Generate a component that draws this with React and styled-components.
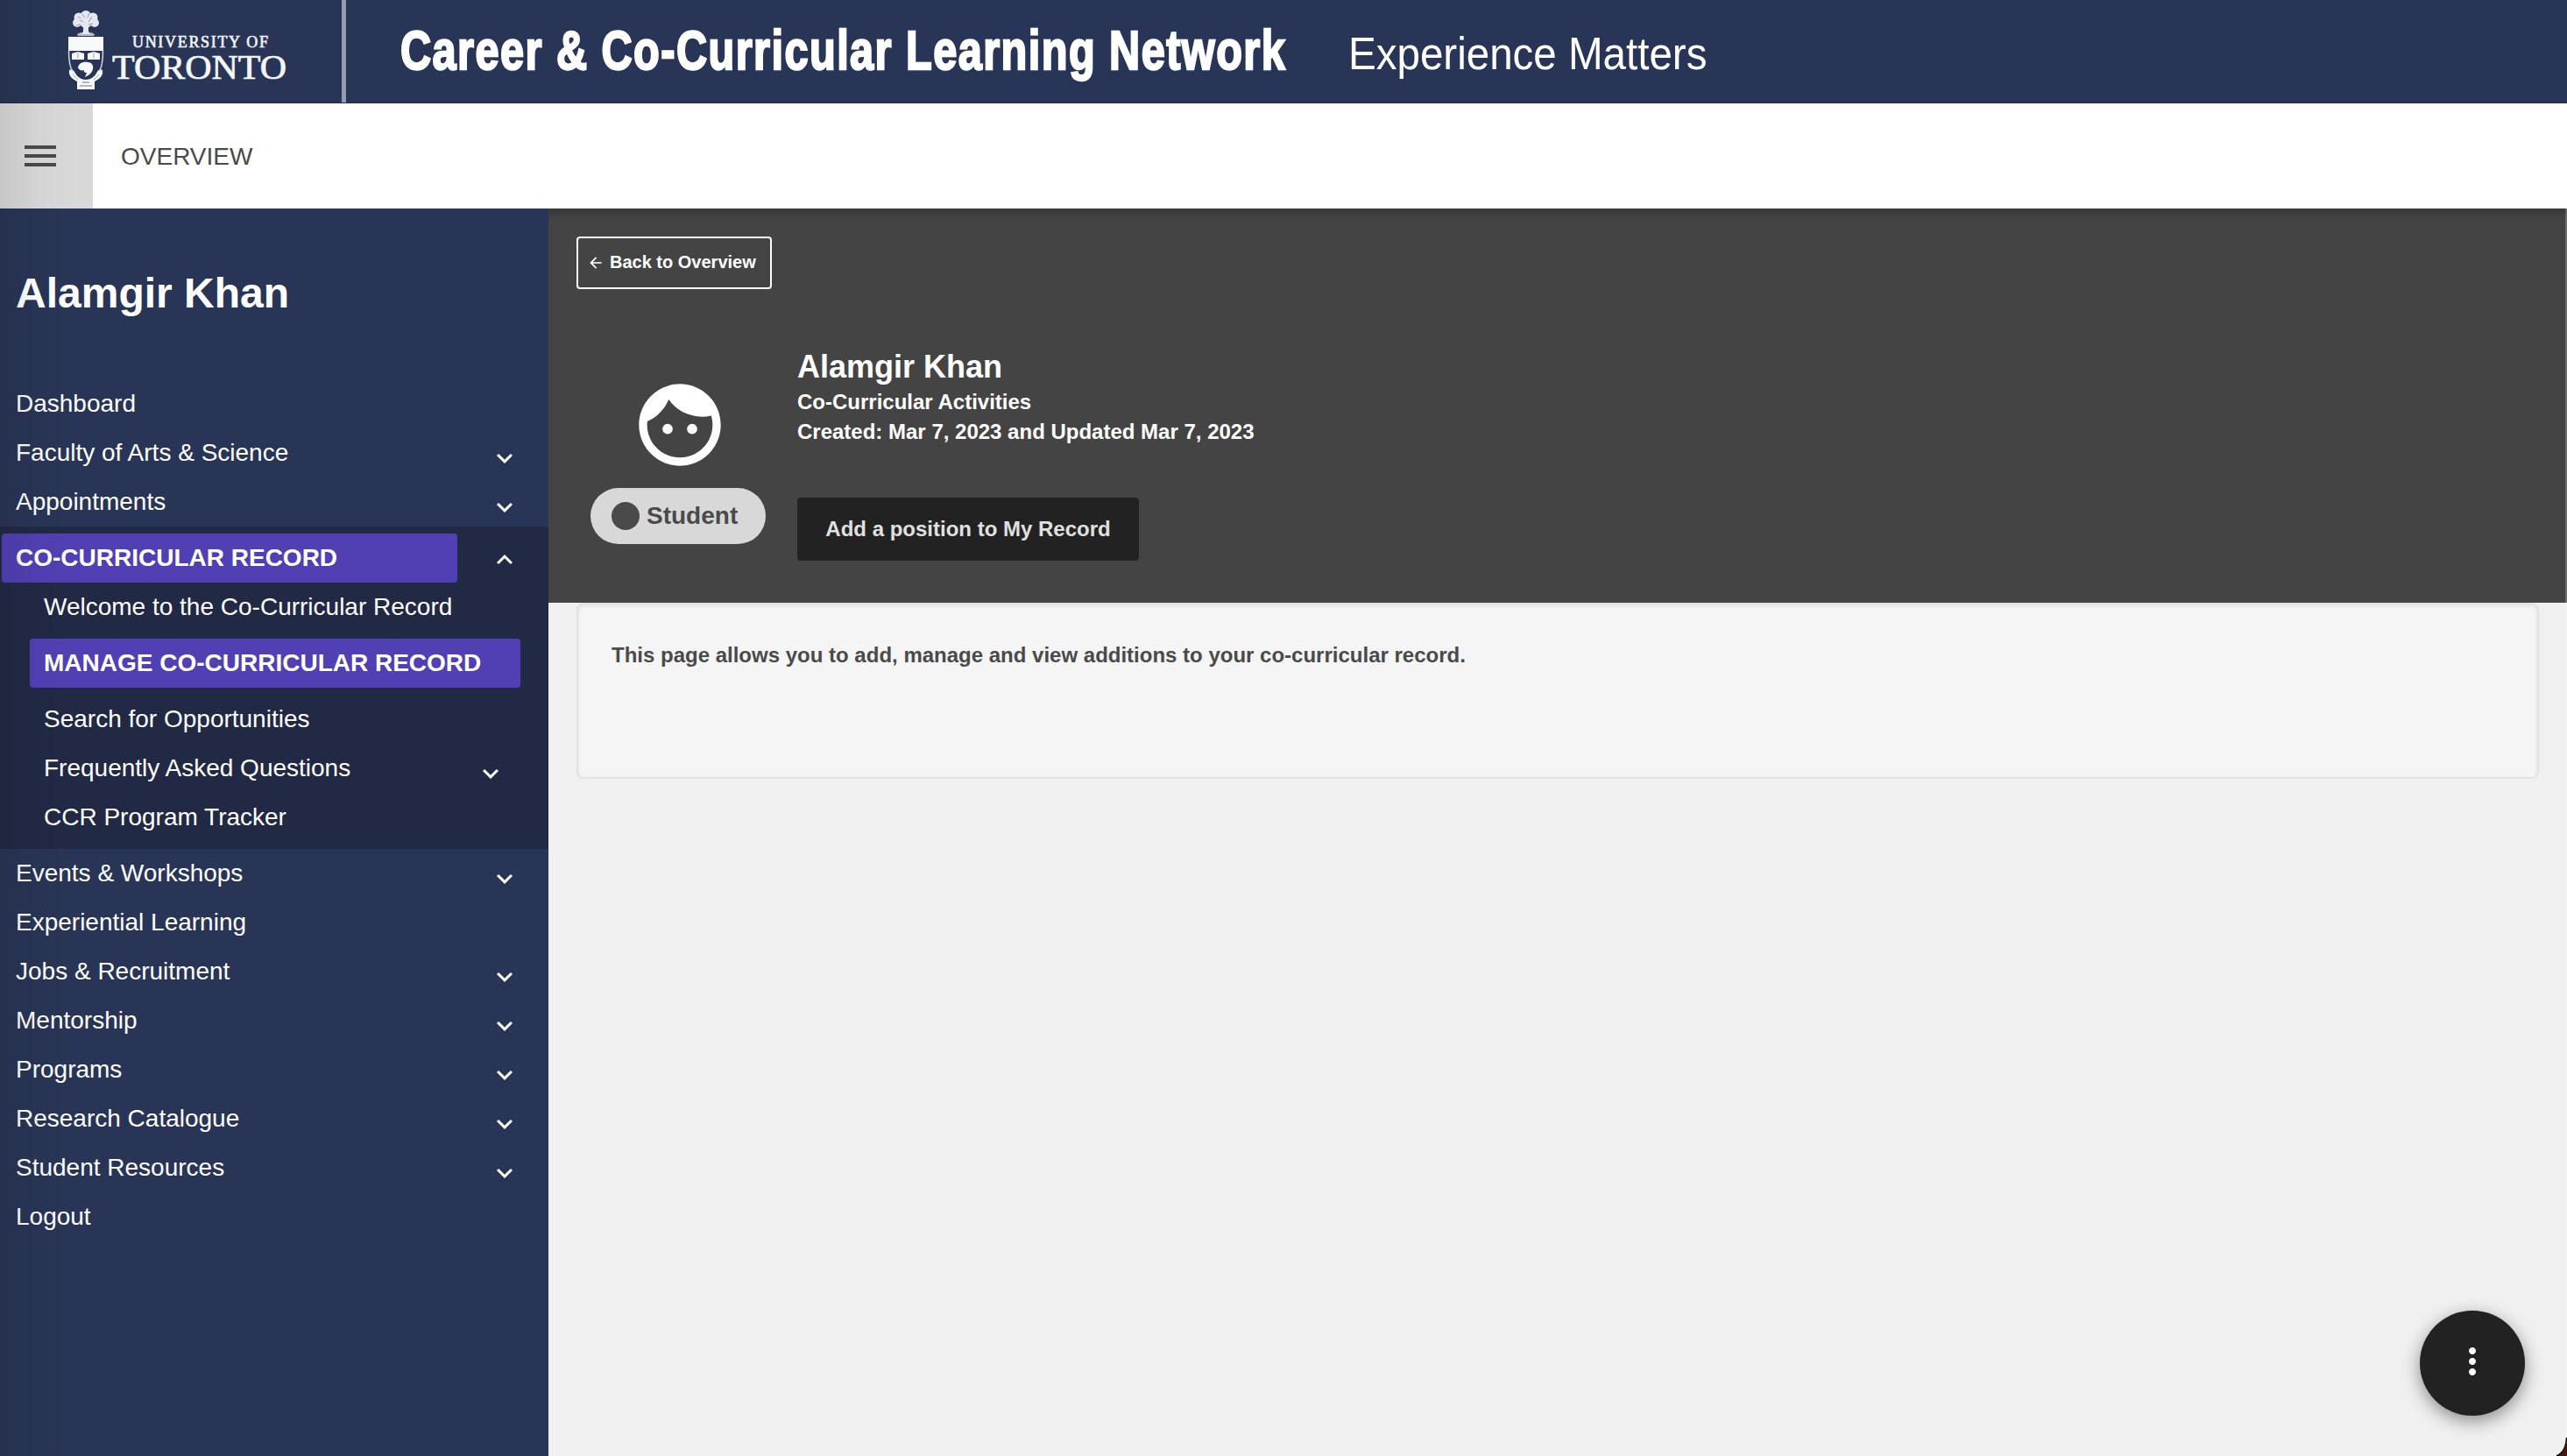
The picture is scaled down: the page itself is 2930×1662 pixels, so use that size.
import React from "react";
import styled, { createGlobalStyle, css } from "styled-components";
import { MdMenu, MdExpandMore, MdExpandLess, MdArrowBack, MdFace, MdMoreVert } from "react-icons/md";

const Global = createGlobalStyle`
  * { box-sizing: border-box; }
  html, body { margin: 0; background: #f0f0f0; }
  body { font-family: "Liberation Sans", Arial, sans-serif; overflow: hidden; }
`;

const Page = styled.div`
  position: relative;
  display: flex;
  flex-direction: column;
  width: 2930px;
  height: 1662px;
  overflow: hidden;
  background: #f0f0f0;
`;

const EdgeShade = styled.div`
  position: absolute;
  left: 0;
  top: 0;
  bottom: 0;
  width: 90px;
  pointer-events: none;
  background: linear-gradient(90deg, rgba(0, 0, 0, 0.08), rgba(0, 0, 0, 0.02) 50%, rgba(0, 0, 0, 0));
`;

const WindowEdge = styled.div`
  position: absolute;
  right: 0;
  top: 238px;
  bottom: 22px;
  width: 2px;
  background: rgba(255, 255, 255, 0.22);
`;

const ScreenCorner = styled.svg`
  position: absolute;
  right: 0;
  bottom: 0;
`;

const Banner = styled.header`
  display: flex;
  height: 118px;
  background: #293556;
  border-bottom: 1px solid #232b4b;
`;

const Brand = styled.div`
  display: flex;
  width: 395px;
  padding: 11px 0 0 77px;
  border-right: 5px solid #949ab0;
`;

const Wordmark = styled.svg`
  margin-left: 9px;
  font-family: "Liberation Serif", "Times New Roman", serif;
  fill: #f4f6fb;
  stroke: #f4f6fb;
`;

const BannerTitle = styled.div`
  width: 1080px;
  padding: 21px 0 0 62px;
  color: #fff;
  font-size: 63px;
  line-height: 72px;
  font-weight: 700;
  letter-spacing: 1.9px;
  white-space: nowrap;
  -webkit-text-stroke: 2.4px #fff;
  span { display: inline-block; transform: scaleX(0.772); transform-origin: 0 0; }
`;

const Tagline = styled.div`
  padding: 31px 0 0 64px;
  color: #fff;
  font-size: 52px;
  line-height: 60px;
  white-space: nowrap;
  span { display: inline-block; transform: scaleX(0.914); transform-origin: 0 0; }
`;

const Bar = styled.div`
  display: flex;
  height: 120px;
  background: #fff;
`;

const MenuButton = styled.div`
  display: flex;
  align-items: center;
  width: 106px;
  padding-left: 22px;
  background: #d8d8d8;
  color: #4a4a4a;
`;

const PageTitle = styled.div`
  padding-left: 32px;
  line-height: 121px;
  font-size: 28px;
  color: #4a4a4a;
`;

const Body = styled.div`
  display: flex;
  flex: 1;
`;

const Sidebar = styled.nav`
  width: 626px;
  background: #293556;
  color: #fff;
`;

const Owner = styled.h1`
  margin: 0;
  padding: 69px 0 0 18px;
  height: 195px;
  font-size: 48px;
  line-height: 56px;
  font-weight: 700;
`;

const Group = styled.div`
  padding: 8px 0;
  background: #212945;
`;

const Row = styled.div`
  display: flex;
  height: 56px;
  padding-left: ${(p) => (p.$sub ? 34 : 2)}px;
  padding-right: ${(p) => (p.$sub ? 48 : 32)}px;
  margin: ${(p) => (p.$sub && p.$active ? "8px 0" : "0")};
`;

const Label = styled.div`
  width: ${(p) => p.$width}px;
  flex: none;
  padding-left: 16px;
  font-size: 28px;
  line-height: 56px;
  white-space: nowrap;
  ${(p) =>
    p.$active &&
    css`
      border-radius: 4px;
      background: #5140b3;
      font-weight: 700;
      text-transform: uppercase;
    `}
`;

const Toggle = styled.div`
  margin-left: auto;
  padding-top: ${(p) => (p.$open ? 12 : 16)}px;
  height: 56px;
  svg { display: block; }
`;

const Content = styled.main`
  flex: 1;
  background: #f0f0f0;
`;

const Hero = styled.section`
  height: 450px;
  padding: 32px 32px 0;
  background: #444 linear-gradient(#373737, #444) no-repeat;
  background-size: 100% 12px;
`;

const BackButton = styled.div`
  display: flex;
  align-items: center;
  width: 223px;
  height: 60px;
  padding-left: 10px;
  border: 2px solid #fff;
  border-radius: 4px;
  color: #fff;
  font-size: 20px;
  font-weight: 700;
  span { padding: 0 0 1px 6px; }
`;

const Profile = styled.div`
  display: flex;
`;

const Avatar = styled.div`
  display: flex;
  flex-direction: column;
  align-items: center;
  width: 200px;
  margin: 99px 36px 0 16px;
  color: #fff;
  svg { display: block; margin-left: 4px; }
`;

const Role = styled.div`
  display: flex;
  align-items: center;
  gap: 8px;
  width: 200px;
  height: 64px;
  margin-top: 16px;
  padding-left: 24px;
  border-radius: 32px;
  background: #d8d8d8;
  color: #4a4a4a;
  font-size: 28px;
  font-weight: 700;
`;

const RoleDot = styled.i`
  width: 32px;
  height: 32px;
  border-radius: 50%;
  background: #4a4a4a;
`;

const Details = styled.div`
  padding-top: 66px;
  color: #fff;
  font-weight: 700;
`;

const Name = styled.div`
  font-size: 36px;
  line-height: 46px;
`;

const Meta = styled.div`
  font-size: 24px;
  line-height: 34px;
`;

const AddButton = styled.div`
  width: 390px;
  height: 72px;
  margin-top: 58px;
  border-radius: 4px;
  background: #222;
  color: #e0e0e0;
  font-size: 24px;
  line-height: 71px;
  text-align: center;
`;

const Well = styled.section`
  height: 201px;
  margin: 0 32px;
  padding: 41px 38px;
  border: 2px solid #e2e2e2;
  border-radius: 8px;
  background: #f5f5f5;
  box-shadow: inset 0 2px 4px rgba(0, 0, 0, 0.08);
  color: #4a4a4a;
  font-size: 24px;
  line-height: 34px;
  font-weight: 700;
`;

const Fab = styled.div`
  position: absolute;
  right: 48px;
  bottom: 46px;
  display: flex;
  align-items: center;
  justify-content: center;
  width: 120px;
  height: 120px;
  padding-bottom: 4px;
  border-radius: 50%;
  background: #222;
  color: #fff;
  box-shadow: 0 6px 20px rgba(0, 0, 0, 0.42);
`;

const before = [
  { label: "Dashboard" },
  { label: "Faculty of Arts & Science", more: true },
  { label: "Appointments", more: true },
];
const record = [
  { label: "Co-Curricular Record", active: true, more: true, open: true },
  { label: "Welcome to the Co-Curricular Record", sub: true },
  { label: "Manage Co-Curricular Record", sub: true, active: true },
  { label: "Search for Opportunities", sub: true },
  { label: "Frequently Asked Questions", sub: true, more: true },
  { label: "CCR Program Tracker", sub: true },
];
const after = [
  { label: "Events & Workshops", more: true },
  { label: "Experiential Learning" },
  { label: "Jobs & Recruitment", more: true },
  { label: "Mentorship", more: true },
  { label: "Programs", more: true },
  { label: "Research Catalogue", more: true },
  { label: "Student Resources", more: true },
  { label: "Logout" },
];

function NavRow({ item }) {
  const width = item.sub ? (item.active ? 560 : 500) : 520;
  return (
    <Row $sub={item.sub} $active={item.active}>
      <Label $active={item.active} $width={width}>{item.label}</Label>
      {item.more && (
        <Toggle $open={item.open}>
          {item.open ? <MdExpandLess size={36} /> : <MdExpandMore size={36} />}
        </Toggle>
      )}
    </Row>
  );
}

function Crest() {
  return (
    <svg width="42" height="92" viewBox="0 0 42 92">
      <g fill="#e4e7f0">
        <circle cx="21" cy="7" r="6" />
        <circle cx="13" cy="9" r="5.5" />
        <circle cx="29" cy="9" r="5.5" />
        <circle cx="11" cy="15" r="5" />
        <circle cx="31" cy="15" r="5" />
        <circle cx="21" cy="14" r="7" />
        <path d="M18 18h6v7l3 3H15l3-3z" />
        <path d="M11 28l4-2 3 2h6l3-2 4 2-1 2H12z" opacity=".75" />
      </g>
      <g fill="#f8f9fc">
        <path d="M1 31h40v16H1z" />
        <path d="M5 50l7-2 7 2v7H5zM23 50l7-2 7 2v7H23z" />
        <path d="M12 66c1-5 6-7 11-6 5 0 7 4 6 8s-4 7-9 9l2-5c-2 0-4-1-3-3-3 1-6 0-7-3z" />
        <path d="M2 69c3-2 5 0 6 2 3 6 8 9 13 9s10-3 13-9c1-2 3-4 6-2 1 6-3 10-9 13v9H11v-9C5 79 1 75 2 69z" />
      </g>
      <path d="M1.500 47c0 12 1 18 4 23M40.500 47c0 12-1 18-4 23" fill="none" stroke="#cfd4e2" strokeWidth="1.5" />
      <g fill="none" stroke="#293556">
        <path d="M17 5l3 4m5-5l-2 5m-9 3l4 2m9-4l-3 4m5 2l-5 1m-9 0l-5 1M12 8l3 2m13-2l-2 3" opacity=".4" />
        <path d="M14 87h14M17 83h8" strokeWidth="1.300" opacity=".45" />
        <path d="M12 49v7M30 49v7M6 74l6 6M36 74l-6 6" opacity=".4" />
      </g>
    </svg>
  );
}

export default function App() {
  return (
    <>
      <Global />
      <Page>
        <Banner>
          <Brand>
            <Crest />
            <Wordmark width="204" height="92">
              <text x="23" y="43" fontSize="18" strokeWidth="0.6" textLength="155">UNIVERSITY OF</text>
              <text x="0" y="78.500" fontSize="39" strokeWidth="0.7" textLength="199" lengthAdjust="spacingAndGlyphs">TORONTO</text>
            </Wordmark>
          </Brand>
          <BannerTitle><span>Career &amp; Co-Curricular Learning Network</span></BannerTitle>
          <Tagline><span>Experience Matters</span></Tagline>
        </Banner>
        <Bar>
          <MenuButton><MdMenu size={48} /></MenuButton>
          <PageTitle>OVERVIEW</PageTitle>
        </Bar>
        <Body>
          <Sidebar>
            <Owner>Alamgir Khan</Owner>
            {before.map((i) => <NavRow key={i.label} item={i} />)}
            <Group>{record.map((i) => <NavRow key={i.label} item={i} />)}</Group>
            {after.map((i) => <NavRow key={i.label} item={i} />)}
          </Sidebar>
          <Content>
            <Hero>
              <BackButton><MdArrowBack size={20} /><span>Back to Overview</span></BackButton>
              <Profile>
                <Avatar>
                  <MdFace size={112} />
                  <Role><RoleDot />Student</Role>
                </Avatar>
                <Details>
                  <Name>Alamgir Khan</Name>
                  <Meta>Co-Curricular Activities</Meta>
                  <Meta>Created: Mar 7, 2023 and Updated Mar 7, 2023</Meta>
                  <AddButton>Add a position to My Record</AddButton>
                </Details>
              </Profile>
            </Hero>
            <Well>This page allows you to add, manage and view additions to your co-curricular record.</Well>
          </Content>
        </Body>
        <EdgeShade />
        <WindowEdge />
        <Fab><MdMoreVert size={48} /></Fab>
        <ScreenCorner width="22" height="22" viewBox="0 0 22 22">
          <path d="M22 2C21 14 17 19 10 22H22z" fill="#4a150c" />
          <path d="M21.500 1C21 13 17 19 10 22" fill="none" stroke="#000" strokeWidth="1.500" />
        </ScreenCorner>
      </Page>
    </>
  );
}
